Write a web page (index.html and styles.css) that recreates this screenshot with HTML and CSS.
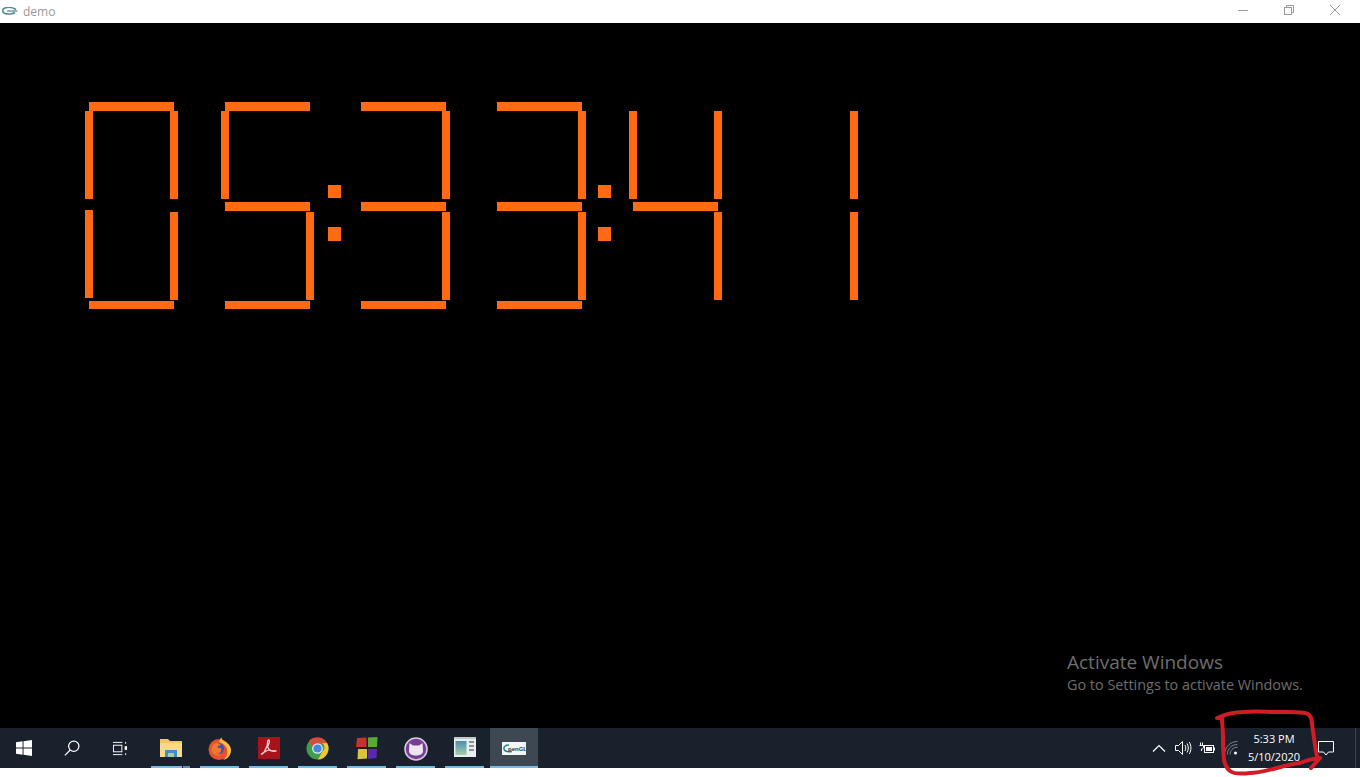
FILE: index.html
```html
<!DOCTYPE html>
<html>
<head>
    <title>demo</title>
    <link rel="stylesheet" href="styles.css">
</head>
<body>
    <header class="titlebar">
        <svg class="app-icon" width="16" height="8" viewBox="0 0 16 8">
            <path d="M14 2.500C11 .5 6 0 3 1 0 2 0 5.500 3 6.500c3 1 8 .5 10-1" fill="none" stroke="#4f8a96" stroke-width="1.600"/>
            <path d="M5 4h10.500" stroke="#6d8f98" stroke-width="1.400"/>
        </svg>
        <span class="title">demo</span>
        <div class="window-buttons">
            <div class="window-button">
                <svg width="12" height="12" viewBox="0 0 12 12"><path d="M1 6.500h10" stroke="#999"/></svg>
            </div>
            <div class="window-button">
                <svg width="12" height="12" viewBox="0 0 12 12" fill="none" stroke="#999"><rect x="1.500" y="3.500" width="7" height="7"/><path d="M3.500 3.500v-2h7v7h-2"/></svg>
            </div>
            <div class="window-button">
                <svg width="12" height="12" viewBox="0 0 12 12"><path d="M1 1l10 10M11 1L1 11" stroke="#999"/></svg>
            </div>
        </div>
    </header>

    <main class="screen">
        <div class="clock">
            <div class="digit">
                <i class="seg seg-a"></i><i class="seg seg-f"></i><i class="seg seg-b"></i>
                <i class="seg seg-e seg-raised"></i><i class="seg seg-c"></i><i class="seg seg-d"></i>
            </div>
            <div class="spacer"></div>
            <div class="digit">
                <i class="seg seg-a"></i><i class="seg seg-f"></i><i class="seg seg-g"></i>
                <i class="seg seg-c"></i><i class="seg seg-d"></i>
            </div>
            <div class="colon colon-first"><b class="dot"></b><b class="dot dot-low"></b></div>
            <div class="digit">
                <i class="seg seg-a"></i><i class="seg seg-b"></i><i class="seg seg-g"></i>
                <i class="seg seg-c"></i><i class="seg seg-d"></i>
            </div>
            <div class="spacer"></div>
            <div class="digit">
                <i class="seg seg-a"></i><i class="seg seg-b"></i><i class="seg seg-g"></i>
                <i class="seg seg-c"></i><i class="seg seg-d"></i>
            </div>
            <div class="colon colon-second"><b class="dot"></b><b class="dot dot-low"></b></div>
            <div class="digit">
                <i class="seg seg-f"></i><i class="seg seg-b"></i><i class="seg seg-g"></i>
                <i class="seg seg-c"></i>
            </div>
            <div class="spacer"></div>
            <div class="digit">
                <i class="seg seg-b"></i><i class="seg seg-c"></i>
            </div>
        </div>

        <div class="watermark">
            <div class="watermark-title">Activate Windows</div>
            <div class="watermark-text">Go to Settings to activate Windows.</div>
        </div>
    </main>

    <footer class="taskbar">
        <div class="shell-button">
            <svg width="16" height="16" viewBox="0 0 17 17" fill="#fff"><path d="M0 2.400l7-1v6.700H0zM8 1.200l9-1.200v8.100H8zM0 9.100h7v6.600l-7-1zM8 9.100h9V17l-9-1.200z"/></svg>
        </div>
        <div class="shell-button">
            <svg width="16" height="16" viewBox="0 0 18 18" fill="none" stroke="#fff" stroke-width="1.400"><circle cx="11" cy="7" r="5.800"/><path d="M7 11.300L1 17.300"/></svg>
        </div>
        <div class="shell-button">
            <svg width="16" height="15" viewBox="0 0 17 16" fill="none" stroke="#fff"><path d="M1 1.500h10M1 14.500h10"/><rect x="1.500" y="4.500" width="9" height="7"/><path d="M14.500 1v2M14.500 13v2" /><rect x="13.500" y="5.500" width="2.500" height="4" fill="#fff" stroke="none"/></svg>
        </div>

        <div class="task-list">
            <div class="task-item">
                <svg width="22" height="22" viewBox="0 0 22 22">
                    <path d="M0 2h8l2 2h12v15H0z" fill="#f2c75c"/>
                    <path d="M0 6h22v14H0z" fill="#f9da85"/>
                    <path d="M5 13h12v7h-3v-4H8v4H5z" fill="#3f8ec4"/>
                    <path d="M8 16h6v4H8z" fill="#a9c9a8"/>
                </svg>
                <span class="run-line run-line-stacked"></span>
            </div>
            <div class="task-item">
                <svg width="23" height="23" viewBox="0 0 23 23">
                    <circle cx="11" cy="12.500" r="10.500" fill="#e8502f"/>
                    <path d="M13 0c1 2 1 3 3 4 4 2 7 5 7 9 0 5-3 9-8 10 4-3 5-7 4-11-1-3-4-6-8-7 1-2 2-4 2-5z" fill="#fbc13c"/>
                    <circle cx="10.500" cy="11.500" r="5.500" fill="#3f4fb8"/>
                    <path d="M5 8c3-3 6-2 8 0l-3 1c-1 2 1 2 3 2 1 3-1 6-4 6l5 1c-4 2-8 0-10-3-1-3 0-5 1-7z" fill="#ef7a2e"/>
                </svg>
                <span class="run-line"></span>
            </div>
            <div class="task-item">
                <svg width="22" height="22" viewBox="0 0 22 22">
                    <rect width="22" height="22" fill="#a8121b"/>
                    <path d="M3 17c2 1 4-3 6-8 1-3 0-6 1.500-6s1 3-1 7c2 4 4 4 9 4-3 1-6 0-8-1-3 1-5 3-7 4z" fill="none" stroke="#f4d5d5" stroke-width="1.300"/>
                </svg>
                <span class="run-line"></span>
            </div>
            <div class="task-item">
                <svg width="23" height="23" viewBox="0 0 24 24">
                    <circle cx="12" cy="12" r="11.500" fill="#3f9d4c"/>
                    <path d="M12 .5a11.500 11.500 0 0 1 10 5.800H12a5.700 5.700 0 0 0-5.300 3.600L3 4A11.500 11.500 0 0 1 12 .5z" fill="#dc4a3d"/>
                    <path d="M22 6.300a11.500 11.500 0 0 1-9.500 17.200l4.500-8a5.700 5.700 0 0 0 0-9.200z" fill="#f4c534"/>
                    <circle cx="12" cy="12" r="5.600" fill="#e8eef5"/>
                    <circle cx="12" cy="12" r="4.300" fill="#4a86e0"/>
                </svg>
                <span class="run-line"></span>
            </div>
            <div class="task-item">
                <svg width="22" height="23" viewBox="0 0 22 23">
                    <path d="M1 1l9.500-.5V10H0z" fill="#c8322c"/>
                    <path d="M12 .5L21.500 0 21 10h-9z" fill="#58a83c"/>
                    <path d="M2 12h9v9.500l-9.500.8z" fill="#d9c338"/>
                    <path d="M12 12h9l-.5 9-8.500 1z" fill="#5a26b4"/>
                </svg>
                <span class="run-line"></span>
            </div>
            <div class="task-item">
                <svg width="24" height="24" viewBox="0 0 24 24">
                    <circle cx="12" cy="12" r="11" fill="#743f95" stroke="#d8c6e2" stroke-width="1.600"/>
                    <path d="M5.500 6l3.500 2.500h6L18.500 6l.5 8c0 3-3 4.500-7 4.500S5 17 5 14z" fill="#eee4f2"/>
                </svg>
                <span class="run-line"></span>
            </div>
            <div class="task-item">
                <svg width="22" height="20" viewBox="0 0 22 20">
                    <defs>
                        <linearGradient id="note-panel" x1="0" y1="0" x2="0" y2="1">
                            <stop offset="0" stop-color="#4a8fb0"/>
                            <stop offset="1" stop-color="#a5cfa8"/>
                        </linearGradient>
                    </defs>
                    <rect width="22" height="20" fill="#e9eded"/>
                    <rect x="1.500" y="4" width="11" height="14" fill="url(#note-panel)"/>
                    <path d="M15 5h5M15 9h5M15 13h5" stroke="#6b7478" stroke-width="1.500"/>
                    <path d="M0 1h22" stroke="#9aa3a6"/>
                </svg>
                <span class="run-line"></span>
            </div>
            <div class="task-item task-item-active">
                <svg width="24" height="13" viewBox="0 0 24 13">
                    <rect width="24" height="13" fill="#f4f6f6"/>
                    <path d="M7 3C3 3 1.500 5 2 7c.5 2 4 3 8 2.500" fill="none" stroke="#2d7f93" stroke-width="1.500"/>
                    <text x="6" y="8.500" class="gl-text">penGL</text>
                </svg>
                <span class="run-line"></span>
            </div>
        </div>

        <div class="tray">
            <div class="tray-icon">
                <svg width="14" height="8" viewBox="0 0 14 8" fill="none" stroke="#fff" stroke-width="1.200"><path d="M1 7.500l6-6 6 6"/></svg>
            </div>
            <div class="tray-icon">
                <svg width="17" height="16" viewBox="0 0 17 16" fill="none" stroke="#fff"><path d="M.5 5.500h3l4-4v13l-4-4h-3z"/><path d="M10 5c1 2 1 4 0 6M12 3.500c1.800 3 1.800 6 0 9M14.200 2c2.300 4 2.300 8 0 12"/></svg>
            </div>
            <div class="tray-icon">
                <svg width="16" height="12" viewBox="0 0 16 12" fill="none" stroke="#fff"><path d="M1.500 .5v3M3.500 .5v3M.5 3.500h4v2c0 1-1 1.500-2 1.500v2"/><rect x="5.500" y="3.500" width="9" height="7"/><rect x="7" y="5" width="6" height="4" fill="#fff" stroke="none"/><path d="M15.500 5.500v3"/></svg>
            </div>
            <div class="tray-icon">
                <svg width="14" height="14" viewBox="0 0 14 14" fill="none" stroke="#7d868e"><path d="M.5 13.500C.5 6.500 6 .5 13.500 .5M3.300 13.500c0-5.500 4.200-10 10-10M6 13.500c0-3.800 3-7.300 7.500-7.300"/><circle cx="11.500" cy="12" r="1.500" fill="#fff" stroke="none"/></svg>
            </div>
            <div class="tray-clock">
                <div>5:33 PM</div>
                <div>5/10/2020</div>
            </div>
            <div class="tray-notify">
                <svg width="16" height="15" viewBox="0 0 16 15" fill="none" stroke="#fff"><path d="M.5 .5h15v10.500h-5L8 14l-2.500-3h-5z"/></svg>
            </div>
            <div class="show-desktop"></div>
        </div>
    </footer>

    <svg class="red-loop" width="125" height="72" viewBox="0 0 125 72" fill="none">
        <path d="M7 13C16 9 25 7 33 7c12-1 24 0 34 0 10 0 26-1 31 2 3 2 4 6 4 10 1 7 2 14 3 21 1 5 1 10 3 13-7 1-13 3-18 5-8 1-16 3-23 5-9 2-18 5-27 5-8 1-16 1-20-2-4-3-5-6-6-11-1-8-1-16-1-24 0-6-1-13-1-18zM110 53c-3 3-6 7-9 10" stroke="#cf1c25" stroke-width="4" stroke-linecap="round" stroke-linejoin="round"/>
    </svg>
</body>
</html>
```

FILE: styles.css
```css
html, body {
    margin: 0;
    height: 777px;
    overflow: hidden;
}
body {
    position: relative;
    display: flex;
    flex-direction: column;
    background-color: #fff;
    font-family: "Open Sans", "Noto Sans", sans-serif;
}

/* title bar */
.titlebar {
    height: 23px;
    display: flex;
    align-items: center;
    background-color: #fff;
}
.app-icon {
    margin-left: 2px;
    margin-bottom: 2px;
}
.title {
    margin-left: 5px;
    font-size: 12px;
    color: #999;
}
.window-buttons {
    margin-left: auto;
    margin-right: 2px;
    display: flex;
}
.window-button {
    width: 46px;
    height: 23px;
    display: flex;
    align-items: center;
    justify-content: center;
    padding-bottom: 3px;
    box-sizing: border-box;
}

/* clock */
.screen {
    height: 705px;
    display: flex;
    flex-direction: column;
    background-color: #000;
}
.clock {
    display: flex;
    padding: 79px 0 0 85px;
}
.digit {
    width: 93px;
    height: 207px;
    display: grid;
    grid-template-columns: 4px 4px 77px 4px 4px;
    grid-template-rows: 9px 88px 3px 9px 1px 88px 1px 8px;
}
.spacer {
    width: 43px;
}
.seg {
    display: block;
    background-color: #ff6a13;
}
.seg-a { grid-column: 2 / 5; grid-row: 1; }
.seg-f { grid-column: 1 / 3; grid-row: 2; }
.seg-b { grid-column: 4 / 6; grid-row: 2; }
.seg-g { grid-column: 2 / 5; grid-row: 4; }
.seg-e { grid-column: 1 / 3; grid-row: 6; }
.seg-c { grid-column: 4 / 6; grid-row: 6; }
.seg-d { grid-column: 2 / 5; grid-row: 8; }
.seg-raised {
    margin-top: -2px;
    margin-bottom: 2px;
}
.colon {
    width: 43px;
    box-sizing: border-box;
    padding-top: 83px;
}
.colon-first {
    padding-left: 14px;
}
.colon-second {
    padding-left: 12px;
}
.dot {
    display: block;
    width: 13px;
    height: 13px;
    background-color: #ff6a13;
}
.dot-low {
    height: 14px;
    margin-top: 29px;
}

/* activation notice */
.watermark {
    margin-top: auto;
    margin-bottom: 33px;
    align-self: flex-end;
    width: 236px;
    padding-right: 57px;
    color: #6e6e6e;
    white-space: nowrap;
}
.watermark-title {
    font-size: 19px;
    line-height: 26px;
}
.watermark-text {
    font-size: 14.4px;
    line-height: 20px;
}

/* taskbar */
.taskbar {
    height: 40px;
    display: flex;
    background-color: #19212c;
}
.shell-button {
    width: 48px;
    display: flex;
    align-items: center;
    justify-content: center;
}
.task-list {
    display: flex;
    margin-left: 2px;
}
.task-item {
    width: 49px;
    display: flex;
    flex-direction: column;
    align-items: center;
    padding-top: 9px;
    box-sizing: border-box;
}
.task-item-active {
    width: 48px;
    margin-left: 1px;
    padding-top: 14px;
    background-color: #3e4853;
}
.run-line {
    margin-top: auto;
    align-self: stretch;
    margin-left: 5px;
    margin-right: 5px;
    height: 2px;
    background-color: #76b9ed;
}
.run-line-stacked {
    background: linear-gradient(to right, #76b9ed 31px, #19212c 31px, #19212c 32px, #5a93bf 32px);
}
.task-item-active .run-line {
    margin-left: 0;
    margin-right: 0;
}
.gl-text {
    font-family: "Liberation Sans", sans-serif;
    font-size: 6px;
    font-weight: bold;
    fill: #1f3f4a;
}
.tray {
    margin-left: auto;
    margin-right: 1px;
    display: flex;
    color: #fff;
}
.tray-icon {
    width: 24px;
    display: flex;
    align-items: center;
    justify-content: center;
}
.tray-clock {
    width: 62px;
    display: flex;
    flex-direction: column;
    align-items: center;
    justify-content: center;
    font-size: 11px;
    line-height: 18px;
}
.tray-notify {
    width: 42px;
    display: flex;
    align-items: center;
    justify-content: center;
}
.show-desktop {
    width: 9px;
    box-sizing: border-box;
    border-right: 1px solid #3a4450;
    margin-right: 3px;
}

/* pen mark drawn over the screenshot */
.red-loop {
    position: absolute;
    left: 1210px;
    top: 705px;
}
```
